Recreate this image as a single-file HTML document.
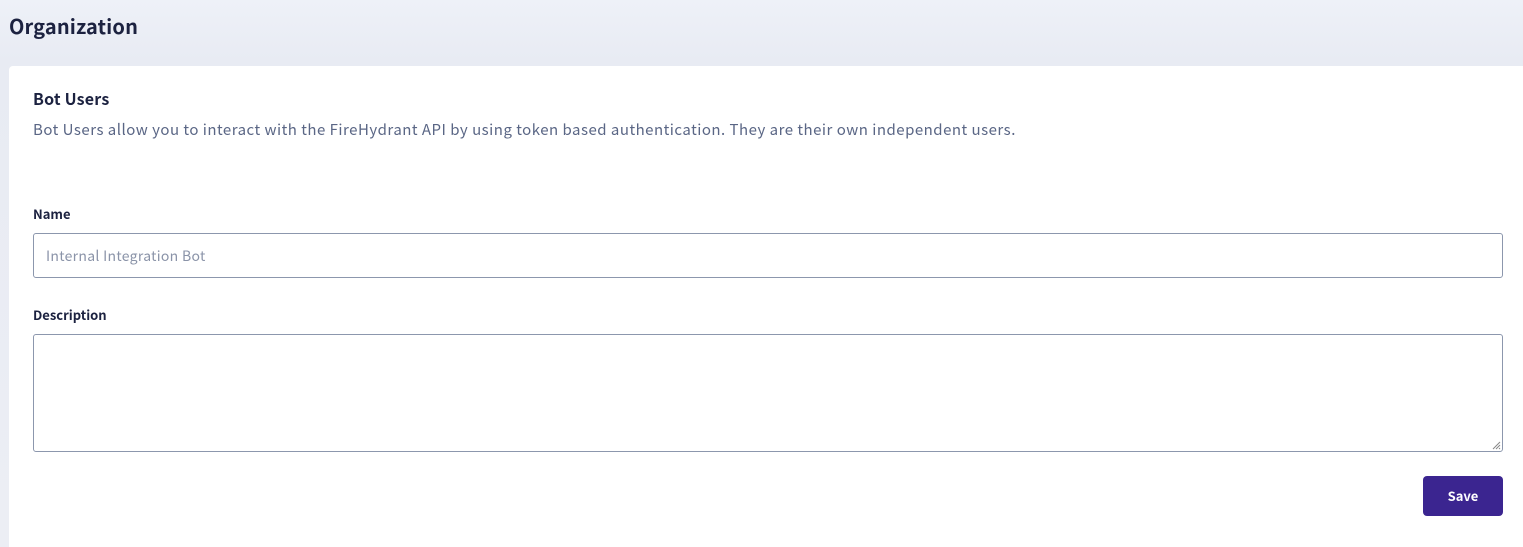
<!DOCTYPE html>
<html><head><style>
body{margin:0;width:1523px;height:547px;overflow:hidden;background:linear-gradient(#eef1f8,#e8ebf3 60px,#eceef4);font-family:"Noto Sans CJK JP","Liberation Sans",sans-serif;position:relative}
h1{position:absolute;left:9px;top:12px;margin:0;font-size:20px;line-height:28px;font-weight:bold;color:#1c2240;letter-spacing:0.15px}
.card{position:absolute;left:9px;top:66px;right:0;bottom:0;background:#fff;border-radius:4px 0 0 0}
.t{position:absolute;left:24px;top:21px;font-size:16px;line-height:22px;font-weight:bold;color:#1c2240;letter-spacing:0.2px}
.d{position:absolute;left:24px;top:53px;font-size:15px;line-height:22px;color:#5a6685;letter-spacing:0.49px}
.l{position:absolute;left:24px;font-size:13px;line-height:18px;font-weight:bold;color:#1c2240}
.in{position:absolute;left:24px;width:1470px;border:1px solid #8c97ad;border-radius:3px;box-sizing:border-box}
.s{position:absolute;left:1414px;top:410px;width:80px;height:40px;background:#3b2590;border-radius:4px;color:#fff;font-weight:bold;font-size:13px;text-align:center;line-height:40px}
</style></head><body>
<h1>Organization</h1>
<div class="card">
<div class="t">Bot Users</div>
<div class="d">Bot Users allow you to interact with the FireHydrant API by using token based authentication. They are their own independent users.</div>
<div class="l" style="top:139px">Name</div>
<div class="in" style="top:167px;height:45px;padding:0 12px;line-height:45px;font-size:14px;color:#8a93a8;letter-spacing:0.3px">Internal Integration Bot</div>
<div class="l" style="top:240px">Description</div>
<div class="in" style="top:268px;height:118px"><svg style="position:absolute;right:1px;bottom:1px" width="9" height="9"><path d="M8 1L1 8M8 4L4 8M8 7L7 8" stroke="#888" stroke-width="1"/></svg></div>
<div class="s">Save</div>
</div>
</body></html>
